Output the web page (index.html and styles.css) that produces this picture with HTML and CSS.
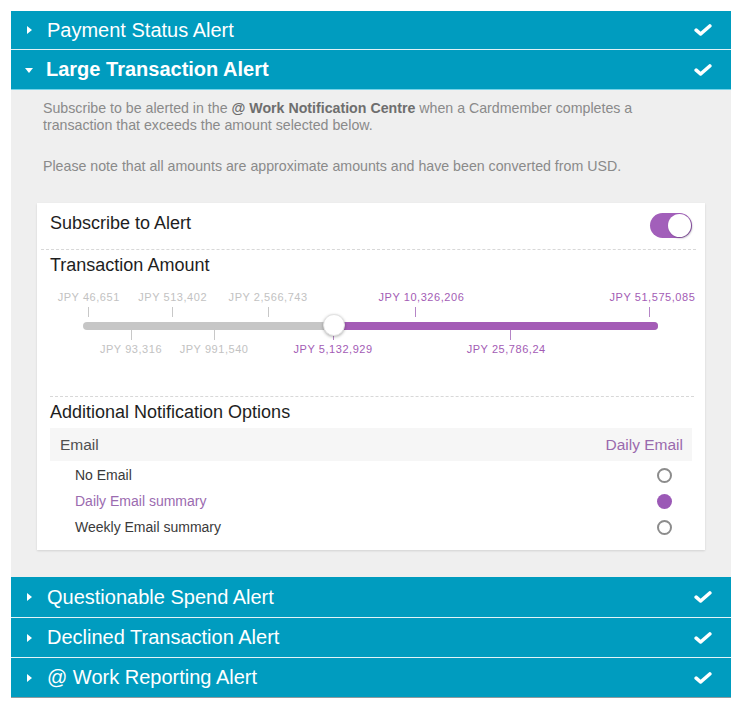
FILE: index.html
```html
<!DOCTYPE html>
<html>
<head>
<meta charset="utf-8">
<link rel="stylesheet" href="styles.css">
</head>
<body>
<div class="accordion">
  <div class="acc-head first">
    <span class="caret caret-right"></span>
    <span class="acc-title">Payment Status Alert</span>
    <svg class="check" viewBox="0 0 18 12" width="18" height="12"><polyline points="2.2,6.2 6.6,10 15.8,2" /></svg>
  </div>
  <div class="acc-head open">
    <span class="caret caret-down"></span>
    <span class="acc-title bold">Large Transaction Alert</span>
    <svg class="check" viewBox="0 0 18 12" width="18" height="12"><polyline points="2.2,6.2 6.6,10 15.8,2" /></svg>
  </div>
  <div class="acc-body">
    <p class="desc">Subscribe to be alerted in the <b>@ Work Notification Centre</b> when a Cardmember completes a transaction that exceeds the amount selected below.</p>
    <p class="desc note">Please note that all amounts are approximate amounts and have been converted from USD.</p>

    <div class="card">
      <div class="row-subscribe">
        <span class="card-title">Subscribe to Alert</span>
        <span class="toggle"><span class="toggle-knob"></span></span>
      </div>
      <div class="dash wide"></div>
      <div class="card-title amount-title">Transaction Amount</div>
      <div class="slider">
        <div class="track"></div>
        <div class="track-fill" style="left: 43.6%;"></div>

        <div class="mark top" style="left: 1.0%;"><span class="lbl">JPY 46,651</span><span class="tick"></span></div>
        <div class="mark top" style="left: 15.6%;"><span class="lbl">JPY 513,402</span><span class="tick"></span></div>
        <div class="mark top" style="left: 32.2%;"><span class="lbl">JPY 2,566,743</span><span class="tick"></span></div>
        <div class="mark top on" style="left: 57.9%;"><span class="lbl shift-r">JPY 10,326,206</span><span class="tick"></span></div>
        <div class="mark top on" style="left: 98.6%;"><span class="lbl shift-end">JPY 51,575,085</span><span class="tick"></span></div>

        <div class="mark bottom" style="left: 8.35%;"><span class="tick"></span><span class="lbl">JPY 93,316</span></div>
        <div class="mark bottom" style="left: 22.8%;"><span class="tick"></span><span class="lbl">JPY 991,540</span></div>
        <div class="mark bottom on" style="left: 43.5%;"><span class="tick"></span><span class="lbl">JPY 5,132,929</span></div>
        <div class="mark bottom on" style="left: 74.3%;"><span class="tick"></span><span class="lbl shift-l">JPY 25,786,24</span></div>

        <span class="knob" style="left: 43.6%;"></span>
      </div>
      <div class="dash narrow"></div>
      <div class="card-title options-title">Additional Notification Options</div>
      <div class="email-row">
        <span>Email</span>
        <span class="email-value">Daily Email</span>
      </div>
      <ul class="options">
        <li><span>No Email</span><span class="radio"></span></li>
        <li class="selected"><span>Daily Email summary</span><span class="radio"></span></li>
        <li><span>Weekly Email summary</span><span class="radio"></span></li>
      </ul>
    </div>
  </div>
  <div class="acc-head q">
    <span class="caret caret-right"></span>
    <span class="acc-title">Questionable Spend Alert</span>
    <svg class="check" viewBox="0 0 18 12" width="18" height="12"><polyline points="2.2,6.2 6.6,10 15.8,2" /></svg>
  </div>
  <div class="acc-head d">
    <span class="caret caret-right"></span>
    <span class="acc-title">Declined Transaction Alert</span>
    <svg class="check" viewBox="0 0 18 12" width="18" height="12"><polyline points="2.2,6.2 6.6,10 15.8,2" /></svg>
  </div>
  <div class="acc-head w">
    <span class="caret caret-right"></span>
    <span class="acc-title">@ Work Reporting Alert</span>
    <svg class="check" viewBox="0 0 18 12" width="18" height="12"><polyline points="2.2,6.2 6.6,10 15.8,2" /></svg>
  </div>
</div>
</body>
</html>
```

FILE: styles.css
```css
html, body {
  margin: 0;
  padding: 0;
  background: #ffffff;
}

body {
  font-family: "Liberation Sans", Arial, sans-serif;
  padding: 11px 11px 0 11px;
}

.accordion {
  width: 720px;
}

.acc-head {
  height: 39px;
  background: #009cbf;
  color: #ffffff;
  display: flex;
  align-items: center;
  padding: 0 19px 0 0;
  box-sizing: border-box;
}

.acc-head.first {
  height: 39px;
  border-bottom: 1px solid #dff1f6;
}

.acc-head.open {
  height: 40px;
  border-bottom: 1px solid #76d3e8;
}

.acc-head.q {
  height: 40px;
}

.acc-head.d {
  height: 40px;
  border-top: 1px solid #e3f3f7;
}

.acc-head.w {
  height: 41px;
  border-top: 1px solid #e3f3f7;
  border-bottom: 1px solid #8f9a9e;
}

.caret {
  width: 0;
  height: 0;
  display: inline-block;
  flex: none;
}

.caret-right {
  margin: 0 15px 0 16px;
  border-top: 4px solid transparent;
  border-bottom: 4px solid transparent;
  border-left: 5px solid #ffffff;
}

.caret-down {
  margin: 2px 13px 0 14px;
  border-left: 4.5px solid transparent;
  border-right: 4.5px solid transparent;
  border-top: 5px solid #ffffff;
}

.acc-title {
  flex: 1;
  font-size: 20px;
  line-height: 23px;
}

.acc-title.bold {
  font-weight: bold;
}

.check {
  flex: none;
  fill: none;
  stroke: #ffffff;
  stroke-width: 3.6;
  stroke-linecap: round;
  stroke-linejoin: round;
}

.acc-body {
  background: #efefef;
  padding: 10px 26px 27px 26px;
}

.desc {
  margin: 0;
  padding: 0 6px;
  font-size: 14.2px;
  line-height: 17px;
  color: #8a8a8a;
}

.desc b {
  color: #6e6e6e;
}

.desc.note {
  margin-top: 24px;
}

.card {
  margin-top: 28px;
  background: #ffffff;
  padding: 0 13px 10px 13px;
  box-shadow: 0 1px 2px rgba(0, 0, 0, 0.12);
}

.row-subscribe {
  display: flex;
  justify-content: space-between;
  align-items: flex-start;
  height: 46px;
}

.card-title {
  font-size: 18px;
  line-height: 22px;
  color: #1e1e1e;
}

.row-subscribe .card-title {
  padding-top: 9px;
}

.toggle {
  margin-top: 10px;
  width: 42px;
  height: 25px;
  border-radius: 13px;
  background: #a25fba;
  position: relative;
  display: inline-block;
}

.toggle-knob {
  position: absolute;
  right: 1px;
  top: 1px;
  width: 23px;
  height: 23px;
  border-radius: 50%;
  background: #ffffff;
  box-shadow: 1px 1px 2px rgba(60, 40, 80, 0.45);
}

.dash {
  border-top: 1px dashed #d8d8d8;
}

.dash.wide {
  margin: 0 -4px 0 -9px;
}

.dash.narrow {
  margin: 0 -2px 0 0;
}

.amount-title {
  padding-top: 4px;
}

.slider {
  position: relative;
  height: 120px;
  margin: 0 34px 0 33px;
}

.track {
  position: absolute;
  left: 0;
  right: 0;
  top: 46px;
  height: 8px;
  border-radius: 4px;
  background: #c6c6c6;
}

.track-fill {
  position: absolute;
  right: 0;
  top: 46px;
  height: 8px;
  border-radius: 0 4px 4px 0;
  background: #a45cb6;
}

.knob {
  position: absolute;
  top: 38px;
  width: 22px;
  height: 22px;
  margin-left: -11px;
  border-radius: 50%;
  background: #ffffff;
  box-sizing: border-box;
  border: 1px solid #e2e2e2;
  box-shadow: 0 1px 3px rgba(0, 0, 0, 0.3);
}

.mark {
  position: absolute;
  width: 0;
  display: flex;
  flex-direction: column;
  align-items: center;
}

.mark.top {
  top: 15px;
}

.mark.bottom {
  top: 54px;
}

.lbl {
  font-size: 11px;
  line-height: 13px;
  letter-spacing: 0.55px;
  white-space: nowrap;
  color: #c2c2c2;
}

.mark.on .lbl {
  color: #a35cb5;
}

.lbl.shift-r {
  margin-left: 11px;
}

.lbl.shift-end {
  margin-left: 5px;
}

.lbl.shift-l {
  margin-right: 8px;
}

.tick {
  width: 1px;
  height: 10px;
  background: #c8c8c8;
  flex: none;
}

.mark.on .tick {
  background: #b585c6;
}

.mark.top .tick {
  margin-top: 3px;
}

.mark.bottom .tick {
  margin-bottom: 3px;
}

.options-title {
  padding-top: 4px;
}

.email-row {
  margin-top: 5px;
  height: 33px;
  background: #f6f6f6;
  display: flex;
  align-items: center;
  justify-content: space-between;
  padding: 0 9px 0 10px;
  font-size: 15.5px;
  color: #505050;
}

.email-value {
  color: #9a6aad;
}

.options {
  list-style: none;
  margin: 1px 0 0 0;
  padding: 0;
}

.options li {
  height: 26px;
  display: flex;
  align-items: center;
  justify-content: space-between;
  padding: 0 20px 0 25px;
  font-size: 14px;
  color: #3a3a3a;
}

.options li.selected {
  color: #9b6bb0;
}

.radio {
  width: 15px;
  height: 15px;
  box-sizing: border-box;
  border-radius: 50%;
  border: 2px solid #8c8c8c;
  background: #ffffff;
}

.options li.selected .radio {
  border: none;
  background: #9b59b6;
}
```
